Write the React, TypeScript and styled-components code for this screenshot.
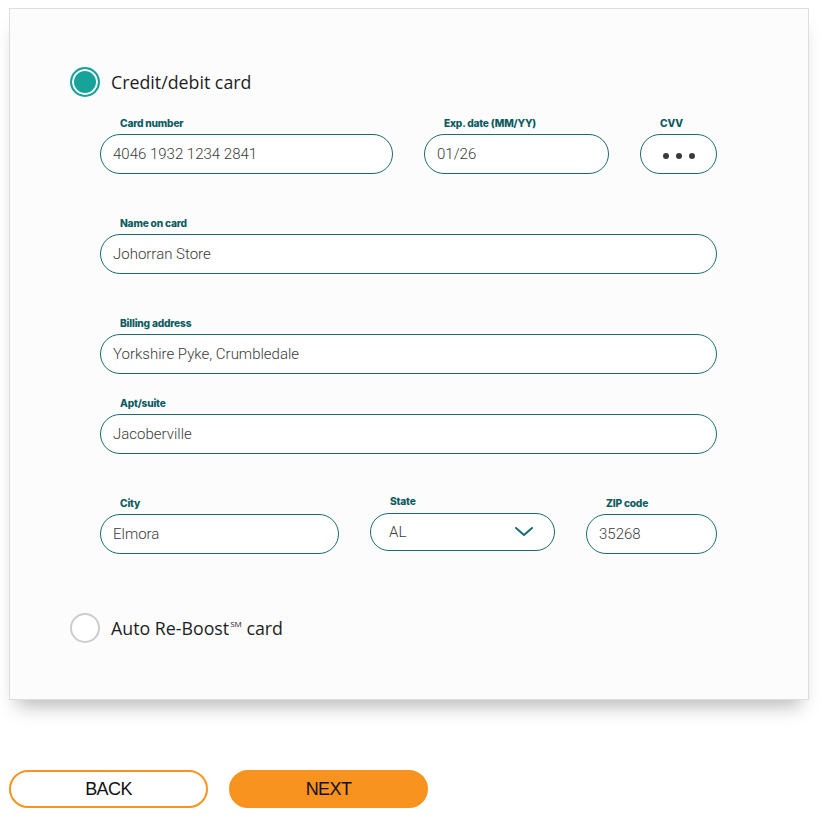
import styled, { createGlobalStyle } from "styled-components";

const teal = "#1a6b70";
const orange = "#f7931e";

const GlobalStyle = createGlobalStyle`
  body {
    margin: 0;
    background: #ffffff;
    font-family: "Open Sans", "Liberation Sans", sans-serif;
  }
`;

const Page = styled.div`
  padding: 8px 0 20px 9px;
`;

const Card = styled.section`
  box-sizing: border-box;
  width: 800px;
  padding: 58px 60px 56px;
  background: #fcfcfc;
  border: 1px solid #dedede;
  box-shadow: 0 14px 18px -8px rgba(0, 0, 0, 0.28);
`;

const Option = styled.label`
  display: flex;
  align-items: center;
  gap: 11px;
  font-size: 17.8px;
  color: #1e1e1e;
  height: 30px;
`;

const Radio = styled.span<{ $checked?: boolean }>`
  box-sizing: border-box;
  width: 30px;
  height: 30px;
  border-radius: 50%;
  border: 2px solid ${(p) => (p.$checked ? "#17a39a" : "#cccccc")};
  background: ${(p) => (p.$checked ? "#17a39a" : "#fff")};
  box-shadow: ${(p) => (p.$checked ? "inset 0 0 0 2px #fff" : "none")};
`;

const Sup = styled.sup`
  font-size: 8px;
  vertical-align: 8px;
  margin-left: 1px;
`;

const Fields = styled.div`
  margin: 20px 0 59px 30px;
  width: 617px;
  display: flex;
  flex-direction: column;
`;

const Row = styled.div<{ $cols: string; $after: number }>`
  display: grid;
  grid-template-columns: ${(p) => p.$cols};
  column-gap: 31px;
  margin-bottom: ${(p) => p.$after}px;
`;

const Field = styled.div<{ $raised?: boolean }>`
  display: flex;
  flex-direction: column;
  margin-top: ${(p) => (p.$raised ? "-2px" : "0")};
`;

const Label = styled.span`
  font-family: Inter, "Liberation Sans", sans-serif;
  font-size: 10.2px;
  font-weight: 800;
  letter-spacing: -0.2px;
  color: #0d5b60;
  line-height: 12px;
  margin: 0 0 5px 20px;
`;

const Box = styled.div<{ $center?: boolean; $short?: boolean }>`
  box-sizing: border-box;
  height: ${(p) => (p.$short ? "38px" : "40px")};
  border: 1px solid ${teal};
  border-radius: 20px;
  background: #fff;
  display: flex;
  align-items: center;
  justify-content: ${(p) => (p.$center ? "center" : "flex-start")};
  padding: 0 12px;
  font-family: Roboto, "Liberation Sans", sans-serif;
  font-size: 15px;
  font-weight: 300;
  color: #3a3a3a;
  white-space: nowrap;
  overflow: hidden;
`;

const Select = styled(Box)`
  justify-content: space-between;
  padding: 0 20px 0 18px;
  margin-top: 1px;
`;

const Dots = styled.span`
  display: flex;
  gap: 7px;
  margin-top: 4px;
`;

const Dot = styled.span`
  width: 6px;
  height: 6px;
  border-radius: 50%;
  background: #3a3a3a;
`;

const Buttons = styled.div`
  display: flex;
  gap: 21px;
  margin-top: 70px;
`;

const Button = styled.button<{ $primary?: boolean }>`
  box-sizing: border-box;
  width: 199px;
  height: 38px;
  border-radius: 19px;
  border: 2px solid ${orange};
  background: ${(p) => (p.$primary ? orange : "#fff")};
  font-family: "Liberation Sans", Arial, sans-serif;
  font-size: 18px;
  letter-spacing: -0.6px;
  color: #111;
  cursor: pointer;
`;

const Chevron = () => (
  <svg width="20" height="12" viewBox="0 0 20 12" fill="none">
    <path d="M2 2l8 7 8-7" stroke={teal} strokeWidth="2" strokeLinecap="round" strokeLinejoin="round" />
  </svg>
);

const App = () => {
  return (
    <Page>
      <GlobalStyle />
      <Card>
        <Option>
          <Radio $checked />
          Credit/debit card
        </Option>

        <Fields>
          <Row $cols="293px 185px 77px" $after={43}>
            <Field>
              <Label>Card number</Label>
              <Box>4046 1932 1234 2841</Box>
            </Field>
            <Field>
              <Label>Exp. date (MM/YY)</Label>
              <Box>01/26</Box>
            </Field>
            <Field>
              <Label>CVV</Label>
              <Box $center>
                <Dots>
                  <Dot />
                  <Dot />
                  <Dot />
                </Dots>
              </Box>
            </Field>
          </Row>

          <Row $cols="1fr" $after={43}>
            <Field>
              <Label>Name on card</Label>
              <Box>Johorran Store</Box>
            </Field>
          </Row>

          <Row $cols="1fr" $after={23}>
            <Field>
              <Label>Billing address</Label>
              <Box>Yorkshire Pyke, Crumbledale</Box>
            </Field>
          </Row>

          <Row $cols="1fr" $after={43}>
            <Field>
              <Label>Apt/suite</Label>
              <Box>Jacoberville</Box>
            </Field>
          </Row>

          <Row $cols="239px 185px 131px" $after={0}>
            <Field>
              <Label>City</Label>
              <Box>Elmora</Box>
            </Field>
            <Field $raised>
              <Label>State</Label>
              <Select $short>
                AL
                <Chevron />
              </Select>
            </Field>
            <Field>
              <Label>ZIP code</Label>
              <Box>35268</Box>
            </Field>
          </Row>
        </Fields>

        <Option>
          <Radio />
          <span>
            Auto Re-Boost<Sup>SM</Sup> card
          </span>
        </Option>
      </Card>

      <Buttons>
        <Button type="button">BACK</Button>
        <Button type="button" $primary>
          NEXT
        </Button>
      </Buttons>
    </Page>
  );
};

export default App;
